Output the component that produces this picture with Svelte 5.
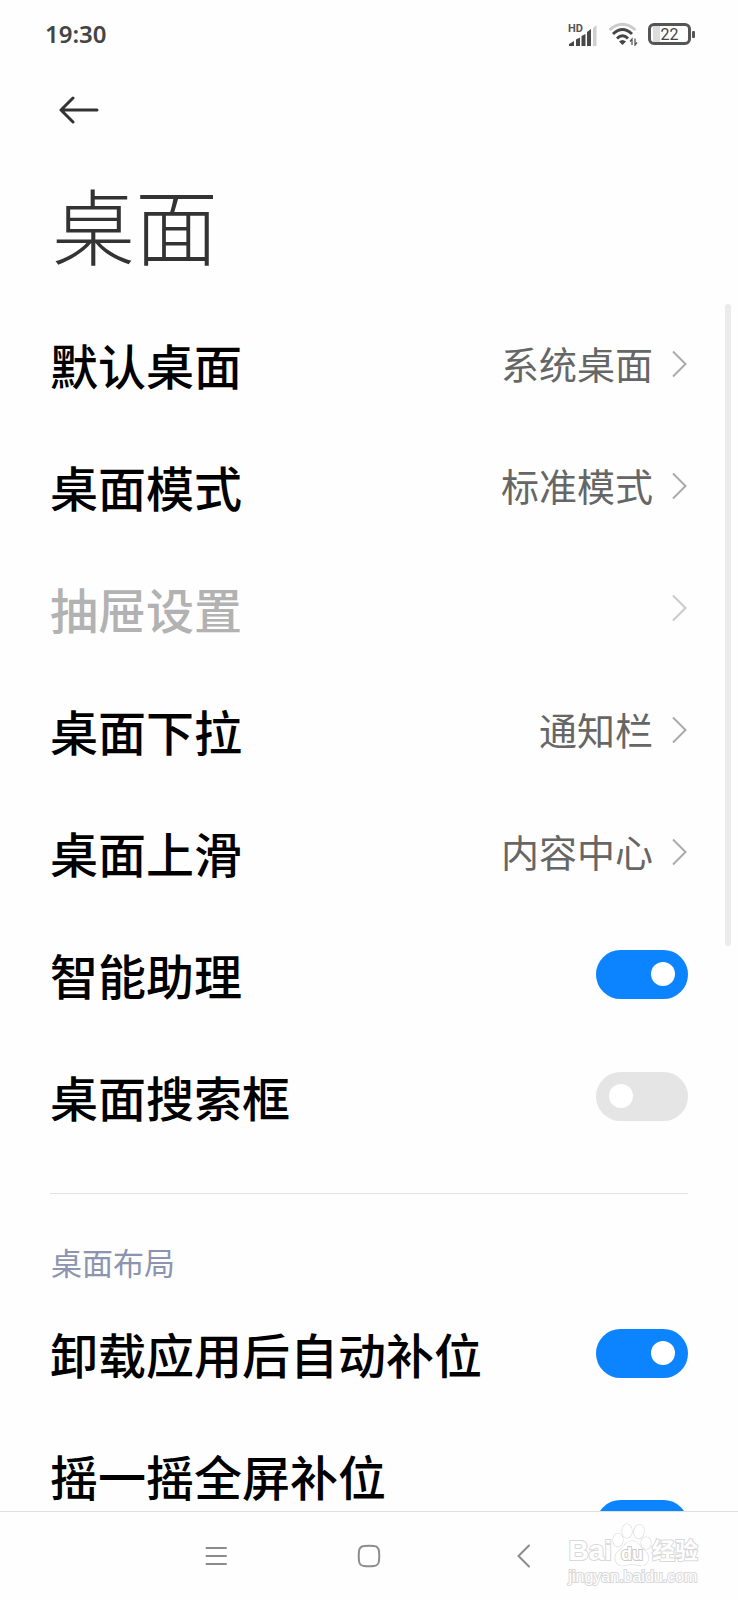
<script>
  // first block: navigation rows and switches; second block lives under its own heading
  const links = [
    { label: '默认桌面', value: '系统桌面' },
    { label: '桌面模式', value: '标准模式' },
    { label: '抽屉设置', value: '', disabled: true },
    { label: '桌面下拉', value: '通知栏' },
    { label: '桌面上滑', value: '内容中心' },
  ];

  let switches = $state([
    { id: 'assistant', label: '智能助理', on: true },
    { id: 'search', label: '桌面搜索框', on: false },
  ]);

  let layout = $state([
    { id: 'refill', label: '卸载应用后自动补位', on: true },
    { id: 'shake', label: '摇一摇全屏补位', on: true, tall: true },
  ]);
</script>

{#snippet toggleRow(item)}
  <label class="row" class:tall={item.tall} for={item.id}>
    <span class="label">{item.label}</span>
    <input class="switch" type="checkbox" role="switch" id={item.id} bind:checked={item.on} />
  </label>
{/snippet}

<div class="screen">
  <header class="status">
    <time>19:30</time>
    <div class="indicators">
      <svg class="signal" width="30" height="28" viewBox="0 -4 30 28" aria-label="HD">
        <text x="0" y="8">HD</text>
        <path d="M1 22v-2l5-3v5z M8 15.500l4-2V22H8z M13.500 12l4-2v12h-4z M19 8l4-3v17h-4z" fill="#484848" />
        <path d="M25 4l3.500-3v21H25z" fill="#cfcfcf" />
      </svg>
      <svg class="wifi" width="30" height="24" viewBox="0 0 30 24" fill="none" aria-label="WLAN">
        <path d="M1.500 8Q14.500-3.500 27.500 8" stroke="#cbcbcb" stroke-width="3" />
        <path d="M5 12Q14.500 3 24 12M9 16.500Q14.500 11 20 16.500" stroke="#454545" stroke-width="3" />
        <path d="M11 19.500Q14.500 16.500 18 19.500L14.500 23z" fill="#454545" />
        <path d="M24 23v-6l-2 2.500M27 16.500v6.500l2-2.500" stroke="#555" stroke-width="1.300" />
      </svg>
      <div class="battery"><span>22</span></div>
    </div>
  </header>

  <main>
    <button class="back" aria-label="返回">
      <svg width="40" height="28" viewBox="0 0 40 28" fill="none" stroke="#333" stroke-width="3" stroke-linecap="round" stroke-linejoin="round">
        <path d="M38 14H2M14 2L2 14L14 26" />
      </svg>
    </button>
    <h1>桌面</h1>

    <section>
      {#each links as item}
        <button class="row" disabled={item.disabled}>
          <span class="label">{item.label}</span>
          <span class="value">{item.value}</span>
          <svg class="chevron" width="16" height="28" viewBox="0 0 16 28" fill="none" stroke="#aaa" stroke-width="2">
            <path d="M2 1.500L14.500 14L2 26.500" />
          </svg>
        </button>
      {/each}
      {#each switches as item}
        {@render toggleRow(item)}
      {/each}
    </section>

    <section class="group">
      <h2>桌面布局</h2>
      {#each layout as item}
        {@render toggleRow(item)}
      {/each}
    </section>

    <div class="scrollbar" aria-hidden="true"></div>
  </main>

  <nav>
    <button aria-label="菜单">
      <svg width="24" height="24" viewBox="0 0 24 24" stroke="#8c8c8c" stroke-width="2" stroke-linecap="round">
        <path d="M2.500 4h19.500M2.500 12h19.500M2.500 20h19.500" />
      </svg>
    </button>
    <button aria-label="主页">
      <svg width="24" height="24" viewBox="0 0 24 24" fill="none" stroke="#8c8c8c" stroke-width="2">
        <path d="M7 2Q12 1.300 17 2Q21.300 2.300 22 7Q22.600 12 22 17Q21.500 21.500 17 22Q12 22.600 7 22Q2.500 21.600 2 17Q1.400 12 2 7Q2.600 2.400 7 2z" />
      </svg>
    </button>
    <button aria-label="返回上一级">
      <svg width="24" height="24" viewBox="0 0 24 24" fill="none" stroke="#8c8c8c" stroke-width="2" stroke-linecap="round">
        <path d="M19 1.500L8.500 12L19 22.500" />
      </svg>
    </button>
    <div class="watermark">
      <div class="brand">
        <span>Bai</span>
        <svg width="40" height="44" viewBox="0 0 40 44" fill="#fff" stroke="#d9d9d9" stroke-width="1.200">
          <ellipse cx="6" cy="17" rx="5" ry="6.500" />
          <ellipse cx="15" cy="8" rx="5" ry="7" />
          <ellipse cx="27" cy="8.500" rx="5" ry="7" transform="rotate(10 27 8.500)" />
          <ellipse cx="34" cy="20" rx="5" ry="6" />
          <path d="M20 18C14 18 12 24 8 27C2 31 2 38 6 41C11 45 15 41 20 41C25 41 29 45 34 41C38 37 37 31 32 27C28 24 26 18 20 18z" />
          <text x="20" y="37" text-anchor="middle">du</text>
        </svg>
        <span class="cjk">经验</span>
      </div>
      <div class="site">jingyan.baidu.com</div>
    </div>
  </nav>
</div>

<style>
  :global(body) {
    margin: 0;
    background: #fefefe;
  }
  .screen {
    display: flex;
    flex-direction: column;
    height: 100vh;
    overflow: hidden;
    color: #000;
    background: #fefefe;
    font-family: 'Noto Sans CJK SC', sans-serif;
  }
  button {
    border: 0;
    padding: 0;
    background: none;
    color: inherit;
    font: inherit;
    cursor: pointer;
  }
  svg {
    display: block;
    flex: none;
  }

  /* status bar */
  .status {
    display: flex;
    align-items: center;
    justify-content: space-between;
    flex: none;
    height: 68px;
    padding: 0 42px 0 45px;
    color: #444;
    font-family: 'Noto Sans', sans-serif;
  }
  time {
    font-size: 24px;
    font-weight: 600;
    line-height: 32px;
  }
  .indicators {
    display: flex;
    align-items: center;
    gap: 10px;
  }
  .signal text {
    font: 700 11px Roboto, sans-serif;
    fill: #555;
  }
  .battery {
    position: relative;
    box-sizing: border-box;
    width: 43px;
    height: 22px;
    margin-right: 5px;
    border: 3px solid #555;
    border-radius: 6px;
    background: linear-gradient(90deg, #fefefe 2px, #ddd 2px, #ddd 9px, #fefefe 9px);
    font: 400 16px/17px Roboto, sans-serif;
    text-align: center;
  }
  .battery::after {
    content: '';
    position: absolute;
    top: 5px;
    right: -7px;
    width: 3px;
    height: 7px;
    border-radius: 1px;
    background: #555;
  }

  main {
    position: relative;
    flex: 1;
    min-height: 0;
    padding: 28px 50px 0;
    overflow: hidden;
  }
  .back {
    display: block;
    margin-left: 9px;
  }
  h1 {
    margin: 38px 0 19px 2px;
    color: #333;
    font-size: 83px;
    font-weight: 300;
    line-height: 122px;
  }

  /* setting rows */
  .row {
    display: flex;
    align-items: center;
    width: 100%;
    height: 122px;
    text-align: left;
    cursor: pointer;
  }
  .label {
    flex: 1;
    font-size: 48px;
    font-weight: 500;
    line-height: 122px;
    white-space: nowrap;
  }
  .value {
    padding-bottom: 4px;
    color: #666;
    font-size: 38px;
  }
  .chevron {
    margin: 0 1px 0 18px;
  }
  .row:disabled {
    color: #b2b2b2;
    cursor: default;
  }
  .row:disabled .chevron {
    opacity: 0.6;
  }
  .row.tall {
    height: 220px;
  }
  .tall .label {
    align-self: flex-start;
  }

  .switch {
    appearance: none;
    flex: none;
    box-sizing: border-box;
    width: 92px;
    height: 49px;
    margin: 0;
    padding: 0 13px;
    border-radius: 25px;
    background: #e5e5e5;
    display: flex;
    align-items: center;
    cursor: pointer;
  }
  .switch::before {
    content: '';
    width: 24px;
    height: 24px;
    border-radius: 50%;
    background: #fff;
  }
  .switch:checked {
    justify-content: flex-end;
    background: #0d84ff;
  }

  .group {
    margin-top: 36px;
    border-top: 1px solid #e2e2e2;
  }
  h2 {
    margin: 45px 0 7px 1px;
    color: #8d94b0;
    font-size: 31px;
    font-weight: 400;
    line-height: 46px;
  }
  .scrollbar {
    position: absolute;
    top: 236px;
    right: 7px;
    width: 6px;
    height: 642px;
    border-radius: 3px;
    background: #ebebeb;
  }

  /* system navigation */
  nav {
    position: relative;
    display: grid;
    grid-template-columns: repeat(3, 1fr);
    flex: none;
    height: 88px;
    padding: 0 19%;
    border-top: 1px solid #e0e0e0;
  }
  nav > button {
    display: grid;
    place-items: center;
  }
  .watermark {
    position: absolute;
    right: 40px;
    bottom: 13px;
    color: #fff;
    font-family: 'Liberation Sans', 'Noto Sans CJK SC', sans-serif;
    -webkit-text-stroke: 2px #d9d9d9;
    paint-order: stroke;
    pointer-events: none;
  }
  .brand {
    display: flex;
    align-items: flex-end;
    font-size: 28px;
    font-weight: 700;
    line-height: 32px;
  }
  .brand .cjk {
    font-size: 23px;
  }
  .brand text {
    font-size: 18px;
    stroke: #ccc;
    stroke-width: 2;
  }
  .site {
    font-size: 16px;
    line-height: 20px;
  }
</style>
